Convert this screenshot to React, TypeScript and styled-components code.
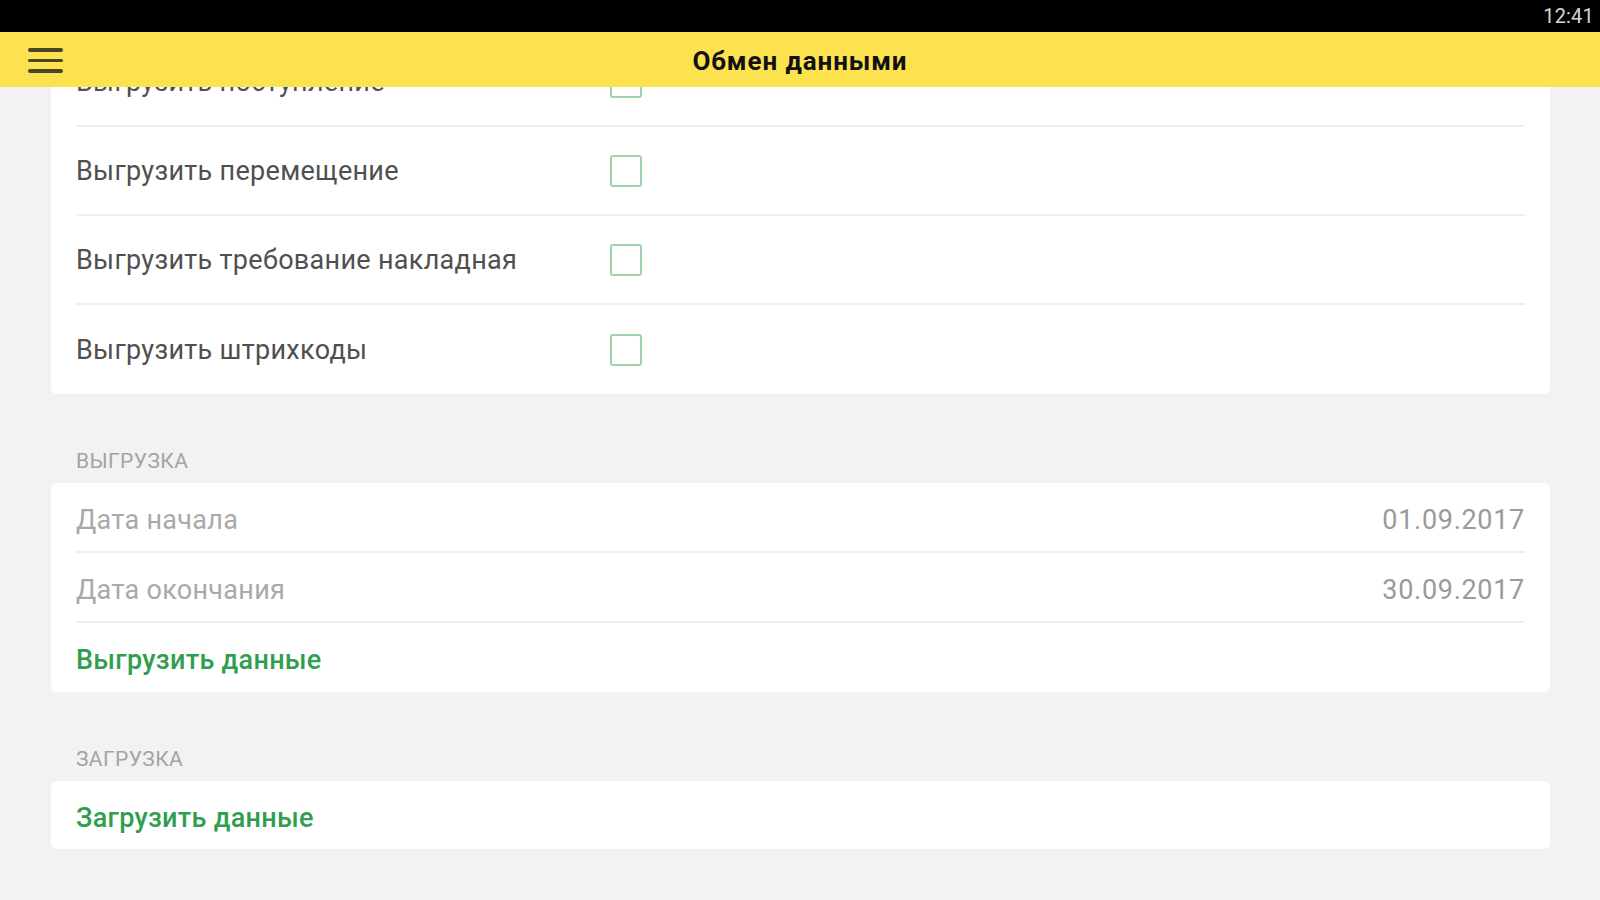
import { FC, useLayoutEffect, useRef } from "react";
import styled, { createGlobalStyle } from "styled-components";

const GlobalStyle = createGlobalStyle`
  html, body {
    margin: 0;
    padding: 0;
    height: 100%;
    background: #f2f2f2;
    font-family: Roboto, "Noto Sans", "Liberation Sans", sans-serif;
  }
`;

const Screen = styled.div`
  display: flex;
  flex-direction: column;
  height: 100vh;
  overflow: hidden;
`;

const StatusBar = styled.div`
  height: 32px;
  flex-shrink: 0;
  background: #000;
  display: flex;
  justify-content: flex-end;
  align-items: center;
  padding-right: 6px;
`;

const Clock = styled.span`
  color: #d6d6d6;
  font-size: 20px;
  letter-spacing: 0.2px;
`;

const AppBar = styled.header`
  height: 55px;
  flex-shrink: 0;
  background: #fce24e;
  display: grid;
  grid-template-columns: 1fr auto 1fr;
  align-items: center;
  padding: 0 28px;
  position: relative;
  z-index: 1;
`;

const MenuButton = styled.div`
  width: 35px;
  display: flex;
  flex-direction: column;
  gap: 7px;
  margin-top: 2px;

  span {
    display: block;
    height: 3.5px;
    border-radius: 2px;
    background: #4a4524;
  }
`;

const Title = styled.h1`
  margin: 2px 0 0;
  font-size: 26px;
  font-weight: 700;
  letter-spacing: 0.9px;
  color: #111;
`;

const Scroller = styled.div`
  flex: 1;
  overflow: hidden;
`;

const Content = styled.div`
  padding: 24px 50px 80px 51px;
  display: flex;
  flex-direction: column;
`;

const Card = styled.div`
  background: #fff;
  border-radius: 6px;
  display: flex;
  flex-direction: column;
`;

const Row = styled.div<{ $height: number; $columns?: string; $nudge?: number }>`
  height: ${(p) => p.$height}px;
  box-sizing: border-box;
  margin: 0 25px;
  padding-top: ${(p) => p.$nudge ?? 0}px;
  display: grid;
  grid-template-columns: ${(p) => p.$columns ?? "1fr auto"};
  align-items: center;
  border-bottom: 2px solid #efefef;

  &:last-child {
    border-bottom: none;
  }
`;

const Label = styled.span<{ $tone?: "dark" | "muted" | "green" }>`
  font-size: 27px;
  letter-spacing: 0.3px;
  color: ${(p) =>
    p.$tone === "muted" ? "#a9a9a9" : p.$tone === "green" ? "#2f9e4f" : "#505050"};
  font-weight: ${(p) => (p.$tone === "green" ? 500 : 400)};
`;

const Value = styled.span`
  font-size: 27px;
  letter-spacing: 0.7px;
  color: #9a9a9a;
  text-align: right;
`;

const Checkbox = styled.span`
  width: 32px;
  height: 32px;
  box-sizing: border-box;
  border: 2.5px solid #9fd3ae;
  border-radius: 3px;
`;

const SectionTitle = styled.div`
  margin: 56px 0 11px 25px;
  line-height: 22px;
  font-size: 21px;
  letter-spacing: 0.4px;
  color: #a3a3a3;
  text-transform: uppercase;
`;

const exportFlags = [
  "Выгрузить поступление",
  "Выгрузить перемещение",
  "Выгрузить требование накладная",
  "Выгрузить штрихкоды",
];

const App: FC = () => {
  const scrollRef = useRef<HTMLDivElement>(null);

  useLayoutEffect(() => {
    if (scrollRef.current) {
      // list is scrolled a bit, first row hides under the app bar
      scrollRef.current.scrollTop = 73;
    }
  }, []);

  return (
    <Screen>
      <GlobalStyle />
      <StatusBar>
        <Clock>12:41</Clock>
      </StatusBar>
      <AppBar>
        <MenuButton>
          <span />
          <span />
          <span />
        </MenuButton>
        <Title>Обмен данными</Title>
        <div />
      </AppBar>
      <Scroller ref={scrollRef}>
        <Content>
          <Card>
            {exportFlags.map((flag) => (
              <Row key={flag} $height={89} $columns="534px 32px 1fr">
                <Label>{flag}</Label>
                <Checkbox />
              </Row>
            ))}
          </Card>

          <SectionTitle>Выгрузка</SectionTitle>
          <Card>
            <Row $height={70} $nudge={5}>
              <Label $tone="muted">Дата начала</Label>
              <Value>01.09.2017</Value>
            </Row>
            <Row $height={70} $nudge={5}>
              <Label $tone="muted">Дата окончания</Label>
              <Value>30.09.2017</Value>
            </Row>
            <Row $height={69} $nudge={4}>
              <Label $tone="green">Выгрузить данные</Label>
            </Row>
          </Card>

          <SectionTitle>Загрузка</SectionTitle>
          <Card>
            <Row $height={68} $nudge={5}>
              <Label $tone="green">Загрузить данные</Label>
            </Row>
          </Card>
        </Content>
      </Scroller>
    </Screen>
  );
};

export default App;
